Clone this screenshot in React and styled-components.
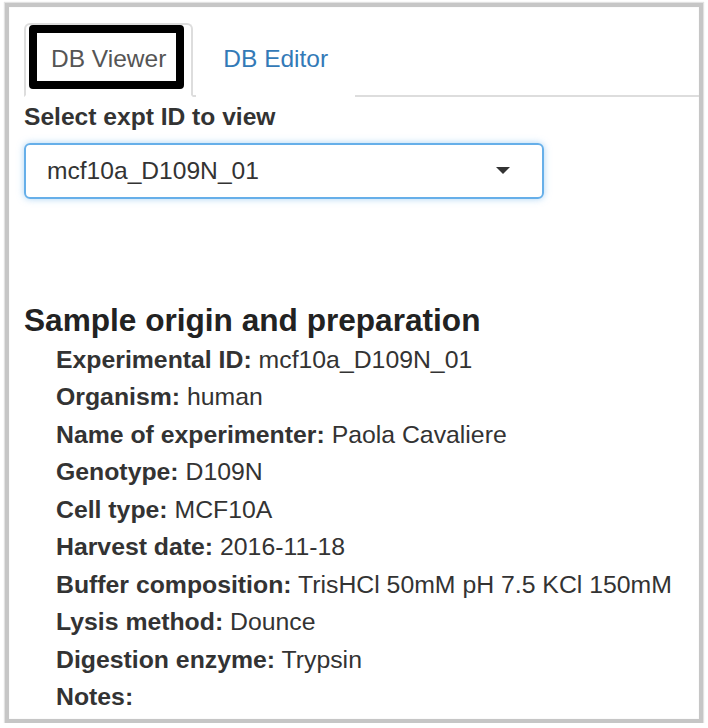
import React from "react";
import styled, { createGlobalStyle } from "styled-components";

const Global = createGlobalStyle`
  html, body { margin: 0; padding: 0; background: #ffffff; }
  body { font-family: "Liberation Sans", Arial, Helvetica, sans-serif; color: #333333; }
  * { box-sizing: border-box; }
`;

const Frame = styled.div`
  margin: 3px 0 0 5px;
  width: 698px;
  height: 720px;
  border: 4px solid #c6c6c6;
  box-shadow: 0 0 1px 1px #e2e2e2, inset 0 0 1px #d8d8d8;
  background: #fff;
  padding: 16px 0 0 15px;
  overflow: hidden;
`;

const TabList = styled.ul`
  list-style: none;
  margin: 0;
  padding: 0;
  display: flex;
  border-bottom: 2px solid #dddddd;
`;

const Tab = styled.li`
  position: relative;
  margin-right: 3px;
  margin-bottom: -2px;
  padding: 16.5px 25px 19.5px 25px;
  font-size: 24.5px;
  line-height: 34px;
  border: 2px solid ${(p) => (p.$active ? "#dddddd" : "transparent")};
  border-bottom-color: ${(p) => (p.$active ? "#ffffff" : "transparent")};
  border-radius: 6px 6px 0 0;
  background: #fff;
  color: ${(p) => (p.$active ? "#555555" : "#337ab7")};
`;

const Highlight = styled.span`
  position: absolute;
  left: 3px;
  top: 0px;
  width: 155px;
  height: 64px;
  border: 8px solid #000;
  border-radius: 4px;
`;

const Label = styled.div`
  margin-top: 2.5px;
  font-size: 24.6px;
  line-height: 34px;
  font-weight: bold;
`;

const Select = styled.div`
  margin-top: 9px;
  width: 520px;
  height: 56px;
  border: 2px solid #66afe9;
  border-radius: 6px;
  box-shadow: 0 0 7px rgba(102, 175, 233, 0.55);
  display: flex;
  align-items: center;
  justify-content: space-between;
  padding: 0 32px 0 21px;
  font-size: 24.6px;
  color: #333;
`;

const Caret = styled.span`
  width: 0;
  height: 0;
  border-left: 7px solid transparent;
  border-right: 7px solid transparent;
  border-top: 7px solid #333;
`;

const Heading = styled.h4`
  margin: 104px 0 4px;
  font-size: 31.6px;
  line-height: 34px;
  font-weight: bold;
  color: #222;
`;

const Items = styled.div`
  padding-left: 32px;
`;

const Item = styled.div`
  font-size: 24.8px;
  line-height: 37.5px;
  white-space: nowrap;
  b { font-weight: bold; }
`;

const data = [
  ["Experimental ID:", "mcf10a_D109N_01"],
  ["Organism:", "human"],
  ["Name of experimenter:", "Paola Cavaliere"],
  ["Genotype:", "D109N"],
  ["Cell type:", "MCF10A"],
  ["Harvest date:", "2016-11-18"],
  ["Buffer composition:", "TrisHCl 50mM pH 7.5 KCl 150mM"],
  ["Lysis method:", "Dounce"],
  ["Digestion enzyme:", "Trypsin"],
  ["Notes:", ""],
];

export default function App() {
  return (
    <>
      <Global />
      <Frame>
        <TabList>
          <Tab $active>
            DB Viewer
            <Highlight />
          </Tab>
          <Tab>DB Editor</Tab>
        </TabList>
        <Label>Select expt ID to view</Label>
        <Select>
          <span>mcf10a_D109N_01</span>
          <Caret />
        </Select>
        <Heading>Sample origin and preparation</Heading>
        <Items>
          {data.map(([k, v]) => (
            <Item key={k}>
              <b>{k}</b> {v}
            </Item>
          ))}
        </Items>
      </Frame>
    </>
  );
}
